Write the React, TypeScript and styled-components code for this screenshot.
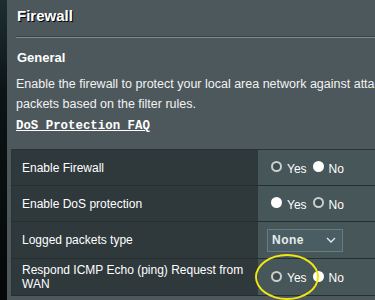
import React from "react";
import styled, { createGlobalStyle } from "styled-components";

const Global = createGlobalStyle`
  html, body {
    margin: 0;
    padding: 0;
    background: #000;
    overflow: hidden;
  }
  body {
    font-family: "Liberation Sans", Arial, sans-serif;
  }
`;

const Page = styled.div`
  display: flex;
  width: 375px;
  height: 300px;
  overflow: hidden;
`;

const SideStrip = styled.div`
  flex: 0 0 7px;
  background: linear-gradient(180deg, #1d2e33 0%, #0c1416 30%, #050708 100%);
`;

const Panel = styled.div`
  flex: 0 0 760px;
  background: #4d585c;
  padding: 0 0 0 9px;
  position: relative;
`;

const Title = styled.div`
  font-size: 15px;
  font-weight: 700;
  color: #fff;
  text-shadow: 1px 1px 0 #000;
  padding: 8px 0 0 1px;
  height: 28px;
  box-sizing: border-box;
  line-height: 16px;
  margin-bottom: 8px;
`;

const Divider = styled.div`
  height: 1px;
  background: #3b4548;
  border-bottom: 1px solid #7d8a8e;
`;

const Section = styled.div`
  font-size: 13px;
  font-weight: 700;
  color: #fff;
  padding: 11px 0 0 1px;
  height: 18px;
  line-height: 18px;
`;

const Description = styled.div`
  font-size: 12.5px;
  line-height: 20px;
  color: #f2f2f2;
  margin-top: 7px;
  white-space: nowrap;
`;

const FaqLink = styled.a`
  display: inline-block;
  font-family: "Liberation Mono", "DejaVu Sans Mono", monospace;
  font-size: 12.4px;
  font-weight: 700;
  color: #fff;
  text-decoration: underline;
  margin-top: 3px;
  line-height: 18px;
`;

const Table = styled.table`
  border-collapse: collapse;
  margin: 14px 0 0 -5px;
  width: 700px;
  border: 1px solid #2a3337;
`;

const Row = styled.tr`
  border-bottom: 1px solid #252e31;
`;

const LabelCell = styled.td<{ $h?: number }>`
  width: 226px;
  background: #2f393c;
  color: #fff;
  font-size: 12px;
  line-height: 14px;
  padding: 0 10px;
  height: ${(p) => p.$h ?? 35}px;
  vertical-align: middle;
`;

const ValueCell = styled.td`
  background: #475659;
  color: #fff;
  font-size: 12px;
  padding: 0 0 0 9px;
  vertical-align: middle;
`;

const RadioGroup = styled.div`
  display: flex;
  align-items: center;
  gap: 6px;
  padding-left: 4px;
`;

const RadioLabel = styled.label`
  display: flex;
  align-items: center;
  gap: 5px;
  padding-top: 2px;
`;

const Dot = styled.span<{ $on: boolean }>`
  display: inline-block;
  width: 11px;
  height: 11px;
  border-radius: 50%;
  box-sizing: border-box;
  margin-top: -4px;
  background: ${(p) => (p.$on ? "#ffffff" : "#3f4a4d")};
  border: ${(p) => (p.$on ? "none" : "2px solid #c9cfd0")};
`;

const Select = styled.div`
  display: flex;
  align-items: center;
  justify-content: space-between;
  width: 76px;
  height: 23px;
  box-sizing: border-box;
  background: #4a5d62;
  border: 1px solid #6a7b7f;
  padding: 0 6px 0 4px;
  font-size: 12px;
  font-weight: 700;
  color: #e6ebec;
  letter-spacing: 0.5px;
`;

const Highlight = styled.div`
  position: absolute;
  left: 248px;
  top: 254px;
  width: 60px;
  height: 42px;
  border: 2.5px solid #f0e614;
  border-radius: 50%;
  pointer-events: none;
`;

const Radio = ({ yes }: { yes: boolean }) => (
  <RadioGroup>
    <RadioLabel>
      <Dot $on={yes} /> Yes
    </RadioLabel>
    <RadioLabel>
      <Dot $on={!yes} /> No
    </RadioLabel>
  </RadioGroup>
);

export default function App() {
  return (
    <Page>
      <Global />
      <SideStrip />
      <Panel>
        <Title>Firewall</Title>
        <Divider />
        <Section>General</Section>
        <Description>
          Enable the firewall to protect your local area network against attacks from hackers and filter
          <br />
          packets based on the filter rules.
        </Description>
        <FaqLink href="#">DoS Protection FAQ</FaqLink>
        <Table>
          <tbody>
            <Row>
              <LabelCell>Enable Firewall</LabelCell>
              <ValueCell>
                <Radio yes={false} />
              </ValueCell>
            </Row>
            <Row>
              <LabelCell>Enable DoS protection</LabelCell>
              <ValueCell>
                <Radio yes={true} />
              </ValueCell>
            </Row>
            <Row>
              <LabelCell $h={36}>Logged packets type</LabelCell>
              <ValueCell>
                <Select>
                  None
                  <svg width="10" height="6" viewBox="0 0 10 6">
                    <path d="M1 1l4 4 4-4" fill="none" stroke="#e6ebec" strokeWidth="1.3" />
                  </svg>
                </Select>
              </ValueCell>
            </Row>
            <Row>
              <LabelCell $h={36}>
                Respond ICMP Echo (ping) Request from
                <br />
                WAN
              </LabelCell>
              <ValueCell>
                <Radio yes={false} />
              </ValueCell>
            </Row>
          </tbody>
        </Table>
        <Highlight />
      </Panel>
    </Page>
  );
}
